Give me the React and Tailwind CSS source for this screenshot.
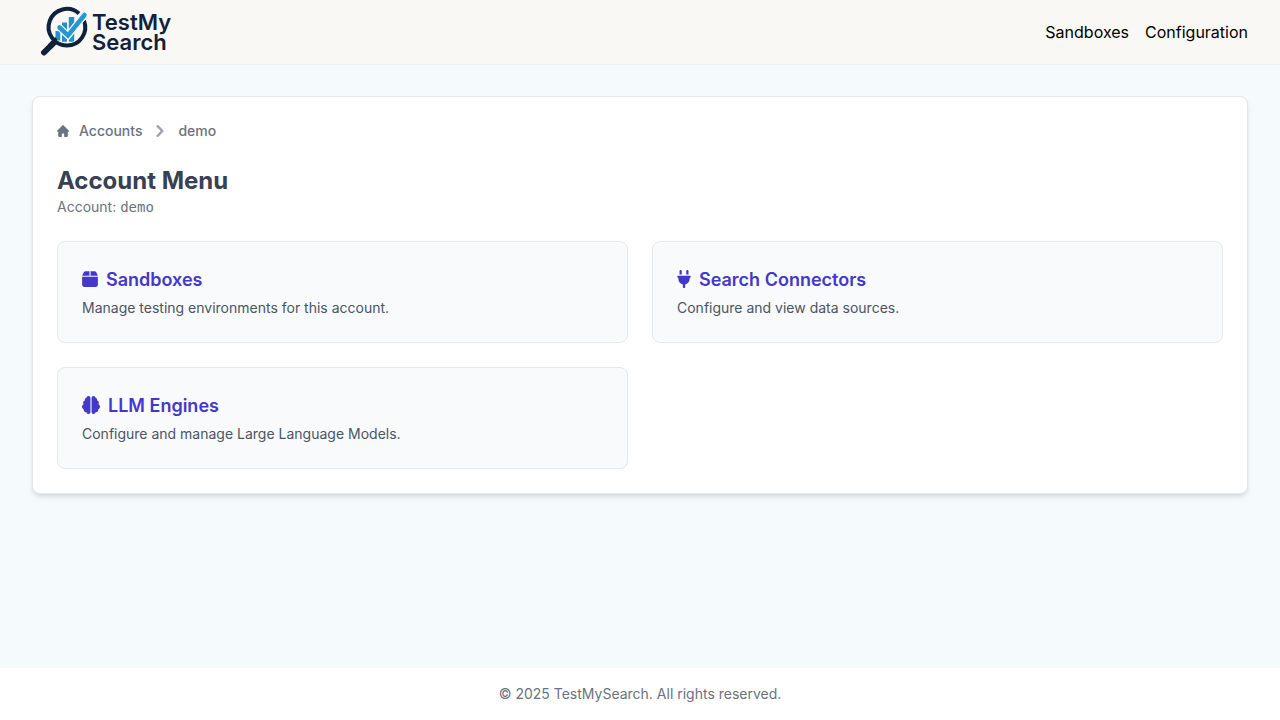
import { FaBox, FaPlug, FaBrain } from "react-icons/fa6";

function LogoMark() {
  return (
    <svg viewBox="0 0 50 64" className="h-16 w-[50px] shrink-0" aria-hidden="true">
      <path d="M4 52.5 L12.5 44" stroke="#10213b" strokeWidth="6" strokeLinecap="round" />
      <path d="M15 41.5 L10 46.5" stroke="#10213b" strokeWidth="6" />
      <path d="M17 38 L12 43" stroke="#10213b" strokeWidth="3.5" />
      <path d="M39 13.5 A18.3 18.3 0 1 0 44 20.7" fill="none" stroke="#10213b" strokeWidth="4" />
      <g fill="#2490c8">
        <path d="M15.5 31h4.800v9.500h-2.300l-2.500-3z" />
        <path d="M22 22.500h5v19.300h-5z" />
        <path d="M28.800 17h5.400v24.300l-2 .5h-3.400z" />
      </g>
      <path d="M19.500 27.500 L28 35.500 L44.500 15" fill="none" stroke="#faf8f4" strokeWidth="7" />
      <path d="M19.500 27.500 L28 35.500 L44.500 15" fill="none" stroke="#2398d5" strokeWidth="4.500" strokeLinecap="round" />
    </svg>
  );
}

function HomeIcon() {
  return (
    <svg viewBox="0 0 20 20" fill="currentColor" className="size-3" aria-hidden="true">
      <path d="m19.707 9.293-2-2-7-7a1 1 0 0 0-1.414 0l-7 7-2 2a1 1 0 0 0 1.414 1.414L2 10.414V18a2 2 0 0 0 2 2h3a1 1 0 0 0 1-1v-4a1 1 0 0 1 1-1h2a1 1 0 0 1 1 1v4a1 1 0 0 0 1 1h3a2 2 0 0 0 2-2v-7.586l.293.293a1 1 0 0 0 1.414-1.414Z" />
    </svg>
  );
}

function ChevronIcon() {
  return (
    <svg viewBox="0 0 20 20" fill="currentColor" className="size-6 text-[#9ca3af]" aria-hidden="true">
      <path fillRule="evenodd" clipRule="evenodd" d="M7.293 14.707a1 1 0 010-1.414L10.586 10 7.293 6.707a1 1 0 011.414-1.414l4 4a1 1 0 010 1.414l-4 4a1 1 0 01-1.414 0z" />
    </svg>
  );
}

const menuItems = [
  { title: "Sandboxes", text: "Manage testing environments for this account.", Icon: FaBox, iconClass: "mb-0.5 h-[18px] w-4" },
  { title: "Search Connectors", text: "Configure and view data sources.", Icon: FaPlug, iconClass: "mb-0.5 h-[18px] w-[14px]" },
  { title: "LLM Engines", text: "Configure and manage Large Language Models.", Icon: FaBrain, iconClass: "mb-0.5 size-[18px]" },
];

function MenuCard({ title, text, Icon, iconClass }) {
  return (
    <a href="#" className="block rounded-lg border border-[#e5e7eb] bg-[#f9fafb] p-6">
      <h2 className="flex items-center gap-2 text-lg font-semibold text-[#4338ca]">
        <Icon className={iconClass} aria-hidden="true" />
        {title}
      </h2>
      <p className="mt-1 text-sm text-[#4b5563]">{text}</p>
    </a>
  );
}

export default function App() {
  return (
    <div className="flex min-h-screen flex-col bg-[#f5fafd] font-['Inter',sans-serif]">
      <header className="flex items-center justify-between border-b border-[#f0f2f4] bg-[#faf8f4] px-8">
        <a href="#" className="flex items-center pl-2">
          <LogoMark />
          <span className="pl-0.5 text-[22px] leading-5 font-semibold text-[#10213b]">
            <span className="block">TestMy</span>
            <span className="block">Search</span>
          </span>
        </a>
        <nav className="flex gap-4 text-base text-black">
          <a href="#">Sandboxes</a>
          <a href="#">Configuration</a>
        </nav>
      </header>
      <main className="grow px-8 pt-[31px] pb-8">
        <div className="rounded-lg border border-[#e5e7eb] bg-white p-6 shadow-md">
          <nav aria-label="Breadcrumb" className="-mt-0.5 mb-[22px]">
            <ol className="flex items-center gap-1.5 text-sm font-medium text-[#6b7280]">
              <li>
                <a href="#" className="flex items-center gap-2.5">
                  <HomeIcon />
                  Accounts
                </a>
              </li>
              <li className="flex items-center gap-1.5">
                <ChevronIcon />
                <span>demo</span>
              </li>
            </ol>
          </nav>
          <h1 className="text-2xl font-bold text-[#374151]">Account Menu</h1>
          <p className="text-sm text-[#6b7280]">
            Account: <span className="font-['DejaVu_Sans_Mono',monospace]">demo</span>
          </p>
          <div className="mt-6 grid grid-cols-1 gap-6 md:grid-cols-2">
            {menuItems.map((item) => (
              <MenuCard key={item.title} {...item} />
            ))}
          </div>
        </div>
      </main>
      <footer className="bg-white p-4 text-center text-sm text-[#6b7280]">
        © 2025 TestMySearch. All rights reserved.
      </footer>
    </div>
  );
}
